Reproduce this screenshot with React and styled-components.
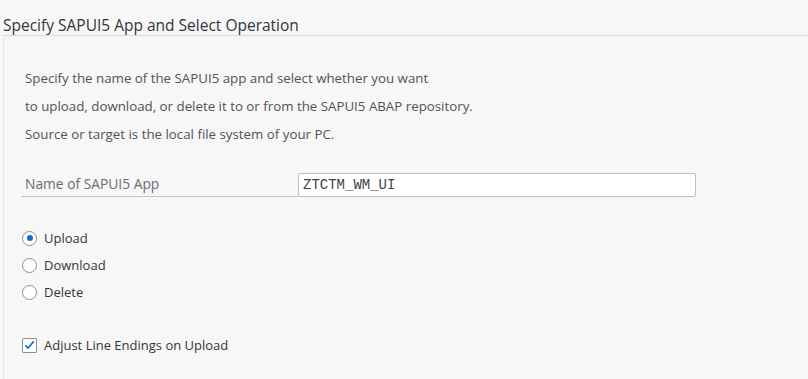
import React from "react";
import styled, { createGlobalStyle } from "styled-components";

const GlobalStyle = createGlobalStyle`
  html, body {
    margin: 0;
    padding: 0;
    background: #f7f7f7;
  }
  body {
    font-family: "Open Sans", "Liberation Sans", Arial, sans-serif;
    color: #32363a;
  }
`;

const Page = styled.div`
  width: 808px;
  height: 379px;
  overflow: hidden;
  padding: 15px 0 0 3px;
  box-sizing: border-box;
`;

const Title = styled.h2`
  margin: 0;
  font-size: 15.5px;
  font-weight: normal;
  color: #32363a;
  line-height: 20px;
  height: 20px;
`;

const Panel = styled.div`
  border-top: 1px solid #dcdcdc;
  border-left: 1px solid #e2e2e2;
  padding: 28px 0 0 21px;
  height: 400px;
`;

const Description = styled.p`
  margin: 0;
  font-size: 13.3px;
  line-height: 28px;
  color: #515456;
`;

const FieldRow = styled.div`
  display: flex;
  align-items: center;
  margin: 24px 0 0 -4px;
`;

const Label = styled.label`
  width: 277px;
  padding-left: 4px;
  box-sizing: border-box;
  height: 25px;
  line-height: 24px;
  font-size: 13.8px;
  color: #6a6d70;
  border-bottom: 1px solid #c4c4c4;
`;

const Input = styled.input`
  width: 398px;
  height: 24px;
  box-sizing: border-box;
  border: 1px solid #bfbfbf;
  border-radius: 2px;
  background: #fff;
  padding: 0 4px;
  line-height: normal;
  font-family: "Liberation Mono", "DejaVu Sans Mono", monospace;
  font-size: 14px;
  color: #3f4246;
  outline: none;
`;

const Options = styled.div`
  display: flex;
  flex-direction: column;
  gap: 9px;
  margin-top: 32px;
`;

const Option = styled.div`
  display: flex;
  align-items: center;
  height: 18px;
  font-size: 13px;
  color: #32363a;
`;

const Radio = styled.span`
  width: 15px;
  height: 15px;
  box-sizing: border-box;
  border-radius: 50%;
  border: 1px solid #89919a;
  background: #fff;
  margin: 0 7px 0 -3px;
  display: flex;
  align-items: center;
  justify-content: center;

  &::after {
    content: "";
    width: 6px;
    height: 6px;
    border-radius: 50%;
    background: ${(p) => (p.checked ? "#0a6ed1" : "transparent")};
  }
`;

const CheckRow = styled(Option)`
  margin-top: 35px;
`;

const Box = styled.span`
  width: 15px;
  height: 15px;
  box-sizing: border-box;
  border: 1px solid #89919a;
  border-radius: 1px;
  background: #fff;
  margin: 0 7px 0 -3px;
  display: flex;
  align-items: center;
  justify-content: center;
`;

const operations = [
  { id: "upload", text: "Upload", checked: true },
  { id: "download", text: "Download" },
  { id: "delete", text: "Delete" },
];

export default function App() {
  return (
    <Page>
      <GlobalStyle />
      <Title>Specify SAPUI5 App and Select Operation</Title>
      <Panel>
        <Description>Specify the name of the SAPUI5 app and select whether you want</Description>
        <Description>to upload, download, or delete it to or from the SAPUI5 ABAP repository.</Description>
        <Description>Source or target is the local file system of your PC.</Description>

        <FieldRow>
          <Label>Name of SAPUI5 App</Label>
          <Input defaultValue="ZTCTM_WM_UI" />
        </FieldRow>

        <Options>
          {operations.map((op) => (
            <Option key={op.id}>
              <Radio checked={op.checked} />
              {op.text}
            </Option>
          ))}
        </Options>

        <CheckRow>
          <Box>
            <svg width="11" height="10" viewBox="0 0 11 10">
              <path d="M1.2 5.2 L4 8 L9.8 1.4" fill="none" stroke="#0a6ed1" strokeWidth="1.6" />
            </svg>
          </Box>
          Adjust Line Endings on Upload
        </CheckRow>
      </Panel>
    </Page>
  );
}
